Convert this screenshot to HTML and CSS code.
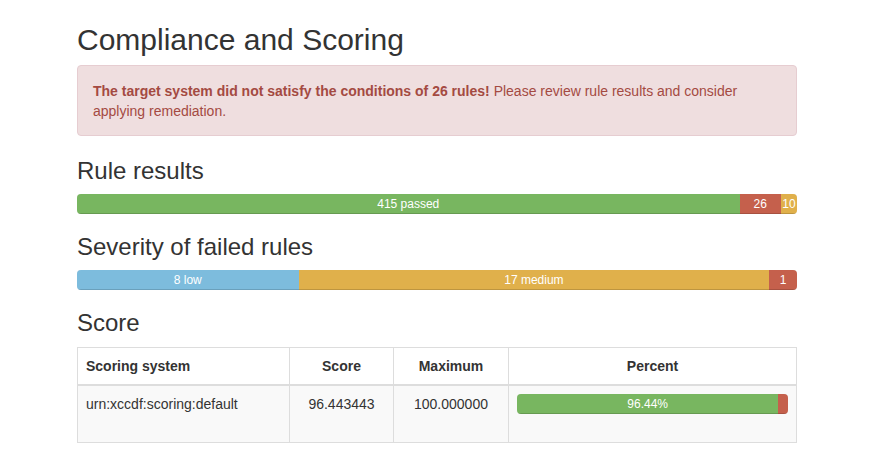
FILE: index.html
```html
<!DOCTYPE html>
<html>
<head>
<meta charset="utf-8">
<title>Compliance and Scoring</title>
<link rel="stylesheet" href="styles.css">
</head>
<body>
<div class="container">
  <h2 class="title">Compliance and Scoring</h2>
  <div class="alert">
    <strong>The target system did not satisfy the conditions of 26 rules!</strong> Please review rule results and consider applying remediation.
  </div>

  <h3 class="section">Rule results</h3>
  <div class="progress">
    <div class="bar bar-success" style="width: 92.0177%">415 passed</div>
    <div class="bar bar-danger" style="width: 5.7649%">26</div>
    <div class="bar bar-warning" style="width: 2.2173%">10</div>
  </div>

  <h3 class="section">Severity of failed rules</h3>
  <div class="progress">
    <div class="bar bar-info" style="width: 30.7692%">8 low</div>
    <div class="bar bar-warning" style="width: 65.3846%">17 medium</div>
    <div class="bar bar-danger" style="width: 3.8462%">1</div>
  </div>

  <h3 class="section section-score">Score</h3>
  <table class="score-table">
    <thead>
      <tr>
        <th class="col-system">Scoring system</th>
        <th class="col-score center">Score</th>
        <th class="col-max center">Maximum</th>
        <th class="col-pct center">Percent</th>
      </tr>
    </thead>
    <tbody>
      <tr>
        <td>urn:xccdf:scoring:default</td>
        <td class="center">96.443443</td>
        <td class="center">100.000000</td>
        <td>
          <div class="progress">
            <div class="bar bar-success" style="width: 96.443443%">96.44%</div>
            <div class="bar bar-danger" style="width: 3.556557%"></div>
          </div>
        </td>
      </tr>
    </tbody>
  </table>
</div>
</body>
</html>
```

FILE: styles.css
```css
* {
  box-sizing: border-box;
}

html, body {
  margin: 0;
  padding: 0;
  background: #fff;
}

body {
  font-family: "Liberation Sans", Arial, Helvetica, sans-serif;
  font-size: 14px;
  line-height: 1.42857143;
  color: #333;
}

.container {
  width: 720px;
  margin-left: 77px;
  padding-top: 3px;
}

.title {
  font-size: 30px;
  font-weight: 500;
  line-height: 33px;
  margin: 20px 0 9px;
}

.section {
  font-size: 24px;
  font-weight: 500;
  line-height: 26px;
  margin: 20px 0 10px;
}

.section-score {
  margin-bottom: 11px;
}

.alert {
  padding: 15px 15px 14px;
  margin-bottom: 22px;
  border: 1px solid #e6cdd1;
  border-radius: 4px;
  background-color: #efdedf;
  color: #a44a42;
}

.alert strong {
  font-weight: bold;
}

.progress {
  display: flex;
  height: 20px;
  margin-bottom: 20px;
  overflow: hidden;
  background-color: #f5f5f5;
  border-radius: 4px;
  box-shadow: inset 0 1px 2px rgba(0, 0, 0, 0.1);
}

.bar {
  height: 100%;
  font-size: 12px;
  line-height: 20px;
  color: #fff;
  text-align: center;
  white-space: nowrap;
  box-shadow: inset 0 -1px 0 rgba(0, 0, 0, 0.15);
}

.bar-success { background-color: #78b660; }
.bar-danger  { background-color: #c5604c; }
.bar-warning { background-color: #e0b04b; }
.bar-info    { background-color: #7dbcdd; }

.score-table {
  width: 100%;
  border-collapse: collapse;
  border-spacing: 0;
  border: 1px solid #ddd;
  margin-bottom: 20px;
}

.score-table th,
.score-table td {
  padding: 8px;
  line-height: 20px;
  border: 1px solid #ddd;
  vertical-align: top;
  text-align: left;
}

.score-table th {
  font-weight: bold;
  vertical-align: bottom;
  border-bottom-width: 2px;
}

.score-table tbody tr {
  background-color: #f9f9f9;
}

.score-table .center {
  text-align: center;
}

.col-system { width: 212px; }
.col-score  { width: 104px; }
.col-max    { width: 115px; }
.col-pct    { width: auto; }
```
